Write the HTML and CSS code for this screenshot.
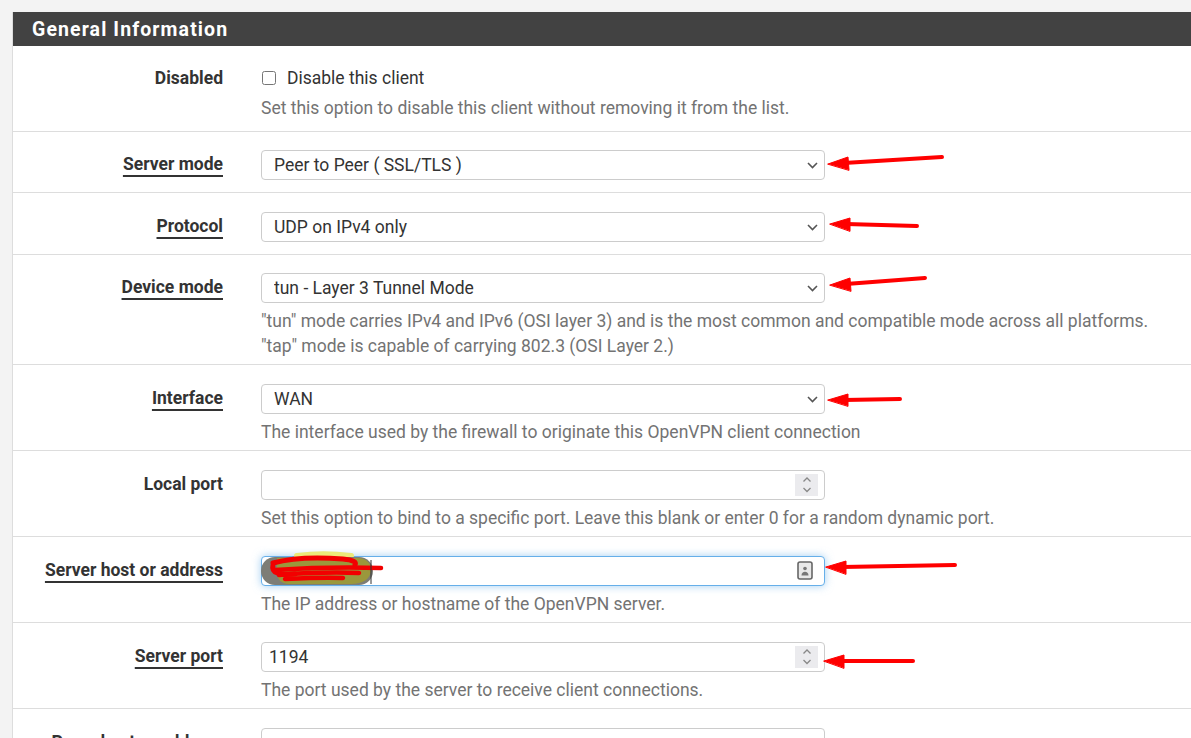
FILE: index.html
```html
<!DOCTYPE html>
<html lang="en">
<head>
  <meta charset="UTF-8" />
  <meta name="viewport" content="width=device-width, initial-scale=1.0"/>
  <title>OpenVPN Client - General Information</title>
  <link rel="stylesheet" href="styles.css">
</head>
<body>
  <div class="panel">
    <div class="panel-heading">
      <h2 class="panel-title">General Information</h2>
    </div>

    <div class="form-row first">
      <div class="form-label"><span>Disabled</span></div>
      <div class="form-field">
        <label class="check"><input type="checkbox"> Disable this client</label>
        <p class="help">Set this option to disable this client without removing it from the list.</p>
      </div>
    </div>

    <div class="form-row">
      <div class="form-label"><span class="required">Server mode</span></div>
      <div class="form-field">
        <div class="select-wrap">
          <select class="control"><option>Peer to Peer ( SSL/TLS )</option></select>
          <svg class="caret" width="11" height="7" viewBox="0 0 11 7"><path d="M1 1l4.5 4.5L10 1" fill="none" stroke="#555" stroke-width="1.6"/></svg>
        </div>
      </div>
    </div>

    <div class="form-row">
      <div class="form-label"><span class="required">Protocol</span></div>
      <div class="form-field">
        <div class="select-wrap">
          <select class="control"><option>UDP on IPv4 only</option></select>
          <svg class="caret" width="11" height="7" viewBox="0 0 11 7"><path d="M1 1l4.5 4.5L10 1" fill="none" stroke="#555" stroke-width="1.6"/></svg>
        </div>
      </div>
    </div>

    <div class="form-row">
      <div class="form-label"><span class="required">Device mode</span></div>
      <div class="form-field">
        <div class="select-wrap">
          <select class="control"><option>tun - Layer 3 Tunnel Mode</option></select>
          <svg class="caret" width="11" height="7" viewBox="0 0 11 7"><path d="M1 1l4.5 4.5L10 1" fill="none" stroke="#555" stroke-width="1.6"/></svg>
        </div>
        <p class="help">"tun" mode carries IPv4 and IPv6 (OSI layer 3) and is the most common and compatible mode across all platforms.<br>"tap" mode is capable of carrying 802.3 (OSI Layer 2.)</p>
      </div>
    </div>

    <div class="form-row">
      <div class="form-label"><span class="required">Interface</span></div>
      <div class="form-field">
        <div class="select-wrap">
          <select class="control"><option>WAN</option></select>
          <svg class="caret" width="11" height="7" viewBox="0 0 11 7"><path d="M1 1l4.5 4.5L10 1" fill="none" stroke="#555" stroke-width="1.6"/></svg>
        </div>
        <p class="help">The interface used by the firewall to originate this OpenVPN client connection</p>
      </div>
    </div>

    <div class="form-row">
      <div class="form-label"><span>Local port</span></div>
      <div class="form-field">
        <div class="input-wrap">
          <input class="control" type="text" value="">
          <span class="spin">
            <svg width="10" height="20" viewBox="0 0 10 20"><path d="M1.5 6.5L5 3l3.5 3.5M1.5 13L5 16.5 8.5 13" fill="none" stroke="#888" stroke-width="1.3"/></svg>
          </span>
        </div>
        <p class="help">Set this option to bind to a specific port. Leave this blank or enter 0 for a random dynamic port.</p>
      </div>
    </div>

    <div class="form-row">
      <div class="form-label"><span class="required">Server host or address</span></div>
      <div class="form-field">
        <div class="input-wrap">
          <input class="control focused" type="text" value="">
          <svg class="redacted" width="125" height="38" viewBox="0 0 125 38">
            <path d="M36 8c15-2 38-2 54 0" fill="none" stroke="#ecea7a" stroke-width="6" stroke-linecap="round"/>
            <rect x="0" y="9" width="112" height="28" rx="14" fill="#7d7d76"/>
            <path d="M16 10h80c10 0 15 6 14 13-1 8-8 13-20 13H28c-8 0-12-5-12-12z" fill="#9a983c"/>
            <path d="M12 15c18-5 45-6 70-4 10 1 14 3 12 6M12 17c-2 8 6 10 22 9" fill="none" stroke="#f20000" stroke-width="5" stroke-linecap="round"/>
            <path d="M14 22c30-2 70-3 106-2M18 27c25-2 55-3 80-2M24 31c20-1 40-2 58-1" fill="none" stroke="#f20000" stroke-width="4.5" stroke-linecap="round"/>
            <path d="M110 12v24" stroke="#333" stroke-width="1"/>
          </svg>
          <svg class="contact" width="16" height="19" viewBox="0 0 16 19">
            <rect x="1" y="1" width="14" height="17" rx="2" fill="#e8e8e8" stroke="#666" stroke-width="1.6"/>
            <circle cx="8" cy="7.5" r="1.8" fill="#777"/>
            <path d="M4.5 14.5c0-2.6 1.6-3.8 3.5-3.8s3.5 1.2 3.5 3.8z" fill="#777"/>
          </svg>
        </div>
        <p class="help">The IP address or hostname of the OpenVPN server.</p>
      </div>
    </div>

    <div class="form-row">
      <div class="form-label"><span class="required">Server port</span></div>
      <div class="form-field">
        <div class="input-wrap">
          <input class="control" type="text" value="1194">
          <span class="spin">
            <svg width="10" height="20" viewBox="0 0 10 20"><path d="M1.5 6.5L5 3l3.5 3.5M1.5 13L5 16.5 8.5 13" fill="none" stroke="#888" stroke-width="1.3"/></svg>
          </span>
        </div>
        <p class="help">The port used by the server to receive client connections.</p>
      </div>
    </div>

    <div class="form-row">
      <div class="form-label"><span>Proxy host or address</span></div>
      <div class="form-field">
        <div class="input-wrap">
          <input class="control" type="text" value="">
        </div>
      </div>
    </div>
  </div>

  <!-- red annotation arrows drawn over the form -->
  <svg class="annotations" width="1191" height="738" viewBox="0 0 1191 738">
    <g fill="#f00" stroke="#f00" stroke-width="4" stroke-linecap="round">
      <line x1="844" y1="163" x2="942" y2="157"/>
      <polygon points="828,164 848,157 849,170" stroke-width="1"/>

      <line x1="846" y1="224" x2="917" y2="226"/>
      <polygon points="830,224 850,218 850,231" stroke-width="1"/>

      <line x1="846" y1="284" x2="925" y2="278"/>
      <polygon points="830,285 850,278 851,291" stroke-width="1"/>

      <line x1="844" y1="400" x2="900" y2="399"/>
      <polygon points="828,400 848,394 848,406" stroke-width="1"/>

      <line x1="842" y1="567" x2="955" y2="565"/>
      <polygon points="826,567 846,561 846,574" stroke-width="1"/>

      <line x1="840" y1="661" x2="913" y2="661"/>
      <polygon points="824,661 844,655 844,668" stroke-width="1"/>
    </g>
  </svg>
</body>
</html>
```

FILE: styles.css
```css
body {
  margin: 0;
  padding: 12px 0 0 12px;
  background: #f3f3f3;
  font-family: Roboto, "Liberation Sans", sans-serif;
  font-size: 17.5px;
  color: #333;
  height: 738px;
  overflow: hidden;
  position: relative;
  box-sizing: border-box;
}
.panel {
  background: #fff;
  border-left: 1px solid #ddd;
}
.panel-heading {
  background: #424242;
  height: 34px;
  display: flex;
  align-items: center;
  padding-left: 19px;
}
.panel-title {
  margin: 0;
  color: #fff;
  font-size: 19.5px;
  font-weight: bold;
  letter-spacing: 1.1px;
}
.form-row {
  display: grid;
  grid-template-columns: 210px 1fr;
  column-gap: 38px;
  padding: 18.5px 0 6px;
  border-top: 1px solid #ddd;
}
.form-row.first {
  border-top: none;
  padding: 19px 0 10px;
}
.form-label {
  text-align: right;
  font-weight: bold;
  line-height: 28px;
}
.form-row.first .form-label {
  line-height: 26px;
}
.required {
  text-decoration: underline;
  text-decoration-thickness: 1.5px;
  text-underline-offset: 5px;
}
.form-field {
  min-width: 0;
}
.check {
  display: flex;
  align-items: center;
  height: 26px;
  margin-bottom: 5px;
  gap: 11px;
}
.check input {
  width: 14px;
  height: 14px;
  margin: 0 0 0 1px;
}
.help {
  margin: 0;
  line-height: 24.5px;
  color: #737373;
  white-space: nowrap;
}
.select-wrap,
.input-wrap {
  position: relative;
  width: 564px;
  margin-bottom: 6px;
}
.control {
  display: block;
  box-sizing: border-box;
  width: 100%;
  height: 30px;
  border: 1px solid #ccc;
  border-radius: 4px;
  background: #fff;
  font-family: inherit;
  font-size: 17.5px;
  color: #333;
  padding: 0 7px;
  outline: none;
}
select.control {
  appearance: none;
  -webkit-appearance: none;
  padding-left: 12px;
}
.control.focused {
  border-color: #66afe9;
  box-shadow: 0 0 8px rgba(102, 175, 233, 0.6);
}
.caret {
  position: absolute;
  right: 7px;
  top: 12px;
}
.spin {
  position: absolute;
  right: 7px;
  top: 4px;
  width: 23px;
  height: 22px;
  background: #ebebee;
  display: flex;
  align-items: center;
  justify-content: center;
}
.contact {
  position: absolute;
  right: 12px;
  top: 5px;
}
.redacted {
  position: absolute;
  left: 0;
  top: -8px;
}
.annotations {
  position: absolute;
  left: 0;
  top: 0;
  pointer-events: none;
}
```
